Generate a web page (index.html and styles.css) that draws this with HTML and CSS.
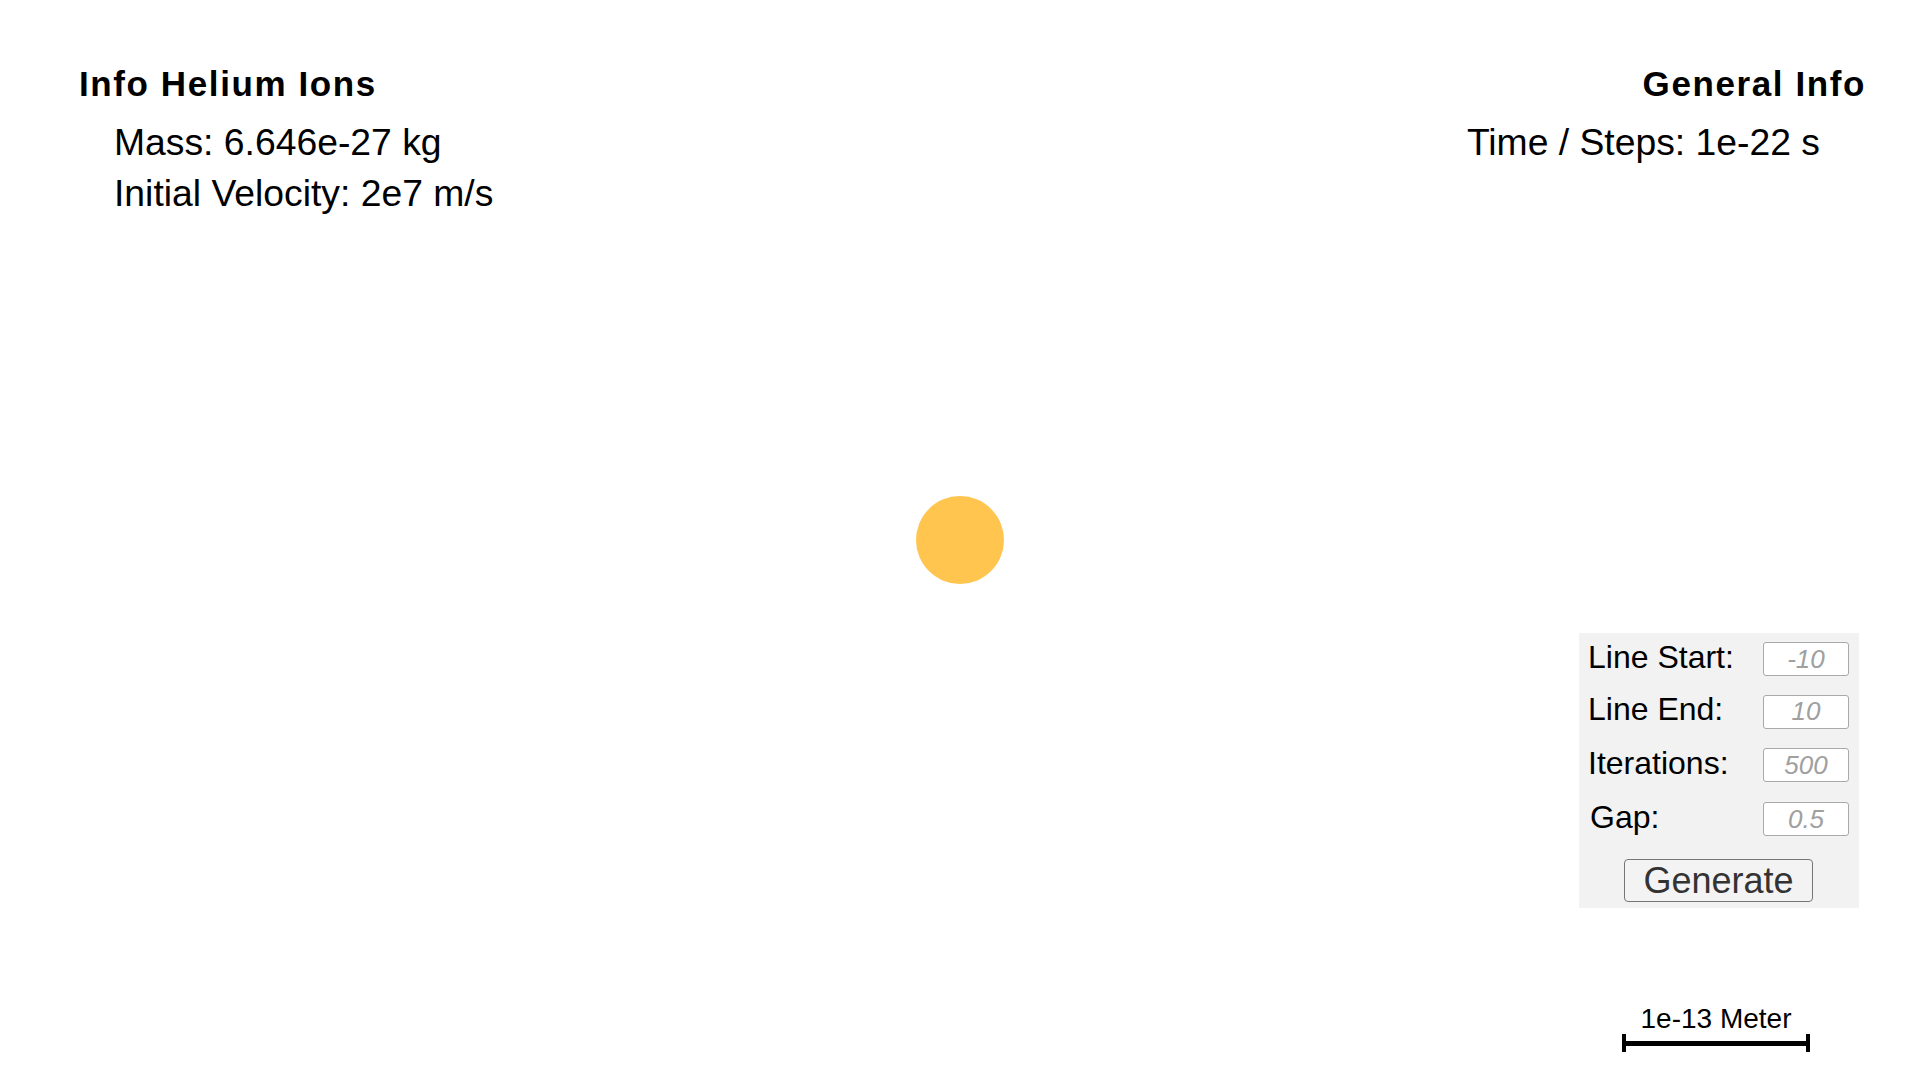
FILE: index.html
```html
<!DOCTYPE html>
<html lang="en">
<head>
<meta charset="utf-8">
<title>Helium Ions Simulation</title>
<link rel="stylesheet" href="styles.css">
</head>
<body>
<div class="screen">
  <header class="top">
    <section class="info info-left">
      <h2 class="info-title">Info Helium Ions</h2>
      <p class="info-line">Mass: 6.646e-27 kg</p>
      <p class="info-line">Initial Velocity: 2e7 m/s</p>
    </section>
    <section class="info info-right">
      <h2 class="info-title">General Info</h2>
      <p class="info-line">Time / Steps: 1e-22 s</p>
    </section>
  </header>

  <div class="ion"></div>

  <aside class="side">
    <form class="panel">
      <div class="fields">
        <label class="field-label" for="ls">Line Start:</label>
        <input class="field-input" id="ls" type="text" placeholder="-10">
        <label class="field-label" for="le">Line End:</label>
        <input class="field-input" id="le" type="text" placeholder="10">
        <label class="field-label" for="it">Iterations:</label>
        <input class="field-input" id="it" type="text" placeholder="500">
        <label class="field-label gap-label" for="gp">Gap:</label>
        <input class="field-input" id="gp" type="text" placeholder="0.5">
      </div>
      <button class="generate" type="button">Generate</button>
    </form>
    <div class="scale">
      <span class="scale-text">1e-13 Meter</span>
      <svg class="scale-bar" width="188" height="18" viewBox="0 0 188 18">
        <rect x="0" y="0" width="4" height="18" fill="#000"/>
        <rect x="184" y="0" width="4" height="18" fill="#000"/>
        <rect x="0" y="7" width="188" height="5" fill="#000"/>
      </svg>
    </div>
  </aside>
</div>
</body>
</html>
```

FILE: styles.css
```css
html, body {
  margin: 0;
  padding: 0;
  background: #ffffff;
}

body {
  font-family: "Liberation Sans", Arial, sans-serif;
  color: #000;
}

.screen {
  position: relative;
  width: 1920px;
  height: 1080px;
  display: flex;
  flex-direction: column;
  overflow: hidden;
}

.top {
  display: flex;
  justify-content: space-between;
  align-items: flex-start;
  padding: 64px 54px 0 79px;
}

.info-title {
  margin: 0 0 13px 0;
  font-size: 35px;
  font-weight: bold;
  letter-spacing: 1.6px;
  line-height: normal;
}

.info-line {
  margin: 0;
  font-size: 37.3px;
  line-height: 51px;
}

.info-left .info-line {
  padding-left: 35px;
}

.info-right {
  text-align: right;
}

.info-right .info-line {
  padding-right: 46px;
}

.ion {
  position: absolute;
  left: 916px;
  top: 496px;
  width: 88px;
  height: 88px;
  border-radius: 50%;
  background: #ffc54f;
}

.side {
  margin-top: auto;
  margin-left: auto;
  margin-right: 61px;
  margin-bottom: 28px;
  width: 280px;
  display: flex;
  flex-direction: column;
  align-items: center;
}

.panel {
  box-sizing: border-box;
  width: 280px;
  background: #f2f2f2;
  padding: 0 10px 6px 9px;
  display: flex;
  flex-direction: column;
  align-items: center;
}

.fields {
  width: 100%;
  display: grid;
  grid-template-columns: 175px 86px;
  grid-template-rows: 52px 53px 54px 54px;
  align-items: center;
}

.field-label {
  font-size: 32px;
  line-height: normal;
  position: relative;
  top: -2px;
}

.gap-label {
  padding-left: 2px;
}

.field-input {
  box-sizing: border-box;
  width: 86px;
  height: 34px;
  margin: 0;
  padding: 0 4px;
  border: 1px solid #a9a9a9;
  border-radius: 3px;
  background: #fff;
  font-family: "Liberation Sans", Arial, sans-serif;
  font-size: 26px;
  text-align: center;
  outline: none;
}

.field-input::placeholder {
  color: #a0a0a0;
  font-style: italic;
}

.generate {
  margin-top: 13px;
  height: 43px;
  padding: 0 18px;
  border: 1px solid #767676;
  border-radius: 4px;
  background: #f3f3f3;
  color: #333;
  font-family: "Liberation Sans", Arial, sans-serif;
  font-size: 36px;
  line-height: normal;
}

.scale {
  margin-top: 96px;
  margin-right: 6px;
  display: flex;
  flex-direction: column;
  align-items: center;
}

.scale-text {
  font-size: 28px;
  line-height: 30px;
}

.scale-bar {
  display: block;
}
```
